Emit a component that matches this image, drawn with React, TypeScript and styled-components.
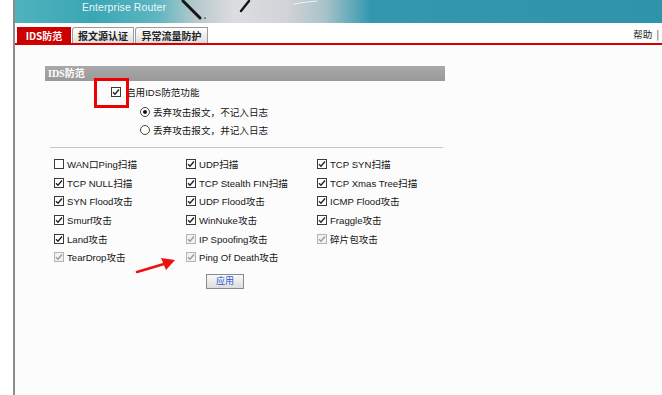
import styled, { createGlobalStyle } from "styled-components";

const GlobalStyle = createGlobalStyle`
  html, body {
    margin: 0;
    padding: 0;
    background: #ffffff;
  }
  body {
    font-family: "Liberation Sans", "Noto Sans CJK SC", sans-serif;
    font-size: 10px;
    color: #111;
  }
`;

const Page = styled.div`
  width: 662px;
  height: 395px;
  overflow: hidden;
  position: relative;
  padding-left: 13px;
  box-sizing: border-box;
`;

const Frame = styled.div`
  height: 100%;
  border-left: 2px solid #8c8c8c;
  background: #fcfcfc;
  display: flex;
  flex-direction: column;
`;

const Banner = styled.div`
  height: 25px;
  position: relative;
  background: #ffffff;
  svg {
    display: block;
  }
`;

const BannerTitle = styled.span`
  position: absolute;
  left: 67px;
  top: 1px;
  color: rgba(255, 255, 255, 0.92);
  font-size: 10.5px;
  letter-spacing: 0.1px;
`;

const TabBar = styled.div`
  height: 18px;
  display: flex;
  align-items: flex-end;
  padding-left: 2px;
  border-bottom: 2px solid #d40000;
  background: #ffffff;
`;

const Tab = styled.div<{ $active?: boolean; $w: number }>`
  width: ${(p) => p.$w}px;
  height: 16px;
  box-sizing: border-box;
  display: flex;
  align-items: center;
  justify-content: center;
  font-family: "Noto Sans CJK SC", sans-serif;
  font-size: 10px;
  font-weight: 700;
  color: ${(p) => (p.$active ? "#ffffff" : "#222")};
  background: ${(p) =>
    p.$active ? "#cc0000" : "linear-gradient(#ffffff, #dedede)"};
  border: 1px solid ${(p) => (p.$active ? "#cc0000" : "#9a9a9a")};
  border-bottom: none;
  border-top-left-radius: ${(p) => (p.$active ? 0 : 3)}px;
  margin-right: 1px;
`;

const Help = styled.div`
  margin-left: auto;
  margin-right: 3px;
  align-self: center;
  font-family: "Noto Sans CJK SC", sans-serif;
  font-size: 9.5px;
  color: #222;
  word-spacing: 2px;
`;

const Content = styled.div`
  flex: 1;
  padding: 21px 0 0 30px;
`;

const Section = styled.div`
  width: 400px;
`;

const SectionHeader = styled.div`
  height: 15px;
  line-height: 15px;
  padding-left: 3px;
  background: linear-gradient(#a9a9a9, #999999);
  color: #ffffff;
  font-family: "Liberation Serif", "Noto Sans CJK SC", serif;
  font-weight: 700;
  font-size: 10px;
`;

const Row = styled.div<{ $indent: number; $h?: number }>`
  display: flex;
  align-items: center;
  height: ${(p) => p.$h ?? 18}px;
  padding-left: ${(p) => p.$indent}px;
`;

const Label = styled.span<{ $gap?: number }>`
  margin-left: ${(p) => p.$gap ?? 3}px;
  font-size: 9.6px;
  white-space: nowrap;
  color: #151515;
`;

const Box = styled.span<{ $disabled?: boolean }>`
  width: 10px;
  height: 10px;
  box-sizing: border-box;
  border: 1px solid ${(p) => (p.$disabled ? "#b4b4b4" : "#3a3a3a")};
  background: ${(p) => (p.$disabled ? "#f2f2f2" : "#ffffff")};
  display: inline-flex;
  align-items: center;
  justify-content: center;
  flex-shrink: 0;
`;

const Radio = styled.span<{ $on?: boolean }>`
  width: 10px;
  height: 10px;
  box-sizing: border-box;
  border-radius: 50%;
  border: 1px solid #444;
  background: #fff;
  display: inline-flex;
  align-items: center;
  justify-content: center;
  flex-shrink: 0;
  &::after {
    content: "";
    width: 4px;
    height: 4px;
    border-radius: 50%;
    background: ${(p) => (p.$on ? "#111" : "transparent")};
  }
`;

const Separator = styled.div`
  margin: 8px 0 0 5px;
  width: 393px;
  border-top: 1px solid #c6c6c6;
`;

const Grid = styled.div`
  margin: 7px 0 0 9px;
  display: grid;
  grid-template-columns: 132px 131px 131px;
  grid-auto-rows: 18.6px;
  align-items: center;
`;

const Cell = styled.div`
  display: flex;
  align-items: center;
`;

const ApplyButton = styled.button`
  margin: 7px 0 0 161px;
  width: 38px;
  height: 15px;
  padding: 0;
  border: 1px solid #8a8a8a;
  background: linear-gradient(#fafafa, #dcdcdc);
  color: #2a55d8;
  font-family: "Noto Sans CJK SC", sans-serif;
  font-size: 9px;
  line-height: 12px;
  display: block;
`;

const Highlight = styled.div`
  position: absolute;
  left: 94px;
  top: 78px;
  width: 29px;
  height: 24px;
  border: 3px solid #ee0000;
`;

const Arrow = styled.svg`
  position: absolute;
  left: 134px;
  top: 255px;
`;

function Check({ disabled }: { disabled?: boolean }) {
  return (
    <Box $disabled={disabled}>
      <svg width="8" height="8" viewBox="0 0 8 8">
        <path
          d="M1 4.2 L3 6.2 L7 1.5"
          fill="none"
          stroke={disabled ? "#9a9a9a" : "#222"}
          strokeWidth="1.4"
        />
      </svg>
    </Box>
  );
}

function EmptyBox() {
  return <Box />;
}

const items: { label: string; checked: boolean; disabled?: boolean }[] = [
  { label: "WAN口Ping扫描", checked: false },
  { label: "UDP扫描", checked: true },
  { label: "TCP SYN扫描", checked: true },
  { label: "TCP NULL扫描", checked: true },
  { label: "TCP Stealth FIN扫描", checked: true },
  { label: "TCP Xmas Tree扫描", checked: true },
  { label: "SYN Flood攻击", checked: true },
  { label: "UDP Flood攻击", checked: true },
  { label: "ICMP Flood攻击", checked: true },
  { label: "Smurf攻击", checked: true },
  { label: "WinNuke攻击", checked: true },
  { label: "Fraggle攻击", checked: true },
  { label: "Land攻击", checked: true },
  { label: "IP Spoofing攻击", checked: true, disabled: true },
  { label: "碎片包攻击", checked: true, disabled: true },
  { label: "TearDrop攻击", checked: true, disabled: true },
  { label: "Ping Of Death攻击", checked: true, disabled: true },
];

function BannerArt() {
  return (
    <svg width="647" height="25" viewBox="0 0 647 25">
      <defs>
        <linearGradient id="bg" x1="0" x2="1" y1="0" y2="0">
          <stop offset="0" stopColor="#4fb3bd" />
          <stop offset="0.12" stopColor="#3aa6b4" />
          <stop offset="0.22" stopColor="#5db6c0" />
          <stop offset="0.28" stopColor="#b8c9cc" />
          <stop offset="0.34" stopColor="#dcdde0" />
          <stop offset="0.42" stopColor="#d2d3d8" />
          <stop offset="0.48" stopColor="#a8c2c8" />
          <stop offset="0.55" stopColor="#3198ae" />
          <stop offset="1" stopColor="#2d94ac" />
        </linearGradient>
      </defs>
      <rect x="0" y="0" width="647" height="23" fill="url(#bg)" />
      <path d="M0 23 L140 23 Q250 27 420 24 L647 24 L647 25 L0 25 Z" fill="#ffffff" />
      <path d="M168 1 L185 18" stroke="#151515" strokeWidth="3" strokeLinecap="round" />
      <path d="M226 11 L234 1" stroke="#151515" strokeWidth="2.4" strokeLinecap="round" />
      <path d="M278 4 Q290 2 302 1" stroke="#eef4f6" strokeWidth="1" fill="none" />
      <circle cx="190" cy="18" r="0.8" fill="#333" />
    </svg>
  );
}

export default function App() {
  return (
    <>
      <GlobalStyle />
      <Page>
        <Frame>
          <Banner>
            <BannerArt />
            <BannerTitle>Enterprise Router</BannerTitle>
          </Banner>
          <TabBar>
            <Tab $active $w={54}>IDS防范</Tab>
            <Tab $w={62}>报文源认证</Tab>
            <Tab $w={73}>异常流量防护</Tab>
            <Help>帮助 |</Help>
          </TabBar>
          <Content>
            <Section>
              <SectionHeader>IDS防范</SectionHeader>
              <Row $indent={66} $h={22}>
                <Check />
                <Label $gap={5}>启用IDS防范功能</Label>
              </Row>
              <Row $indent={95}>
                <Radio $on />
                <Label>丢弃攻击报文，不记入日志</Label>
              </Row>
              <Row $indent={95}>
                <Radio />
                <Label>丢弃攻击报文，并记入日志</Label>
              </Row>
              <Separator />
              <Grid>
                {items.map((it) => (
                  <Cell key={it.label}>
                    {it.checked ? <Check disabled={it.disabled} /> : <EmptyBox />}
                    <Label>{it.label}</Label>
                  </Cell>
                ))}
              </Grid>
              <ApplyButton>应用</ApplyButton>
            </Section>
          </Content>
        </Frame>
        <Highlight />
        <Arrow width="44" height="22" viewBox="0 0 44 22">
          <path d="M3 17 L30 9" stroke="#ee1111" strokeWidth="2.6" strokeLinecap="round" />
          <path d="M41 5 L27 3 L32 15 Z" fill="#ee1111" />
        </Arrow>
      </Page>
    </>
  );
}
